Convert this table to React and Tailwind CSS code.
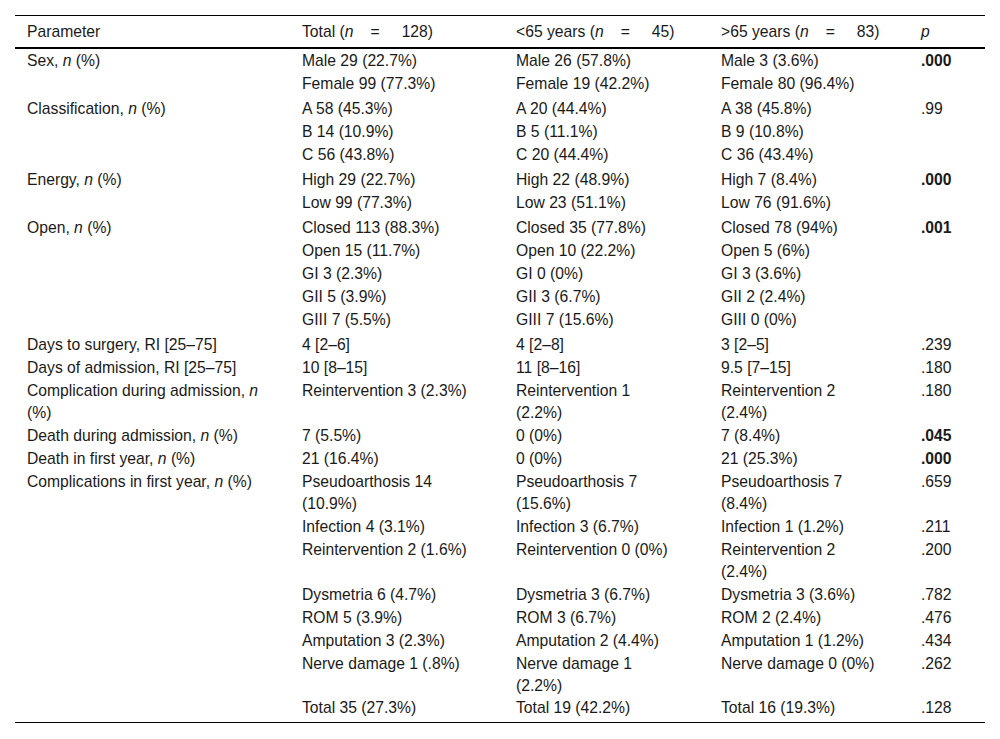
const N = () => <i>n</i>;

const groups = [
  {
    label: <>Sex, <N /> (%)</>,
    rows: [
      ["Male 29 (22.7%)", "Male 26 (57.8%)", "Male 3 (3.6%)", ".000", true],
      ["Female 99 (77.3%)", "Female 19 (42.2%)", "Female 80 (96.4%)", ""],
    ],
  },
  {
    label: <>Classification, <N /> (%)</>,
    rows: [
      ["A 58 (45.3%)", "A 20 (44.4%)", "A 38 (45.8%)", ".99"],
      ["B 14 (10.9%)", "B 5 (11.1%)", "B 9 (10.8%)", ""],
      ["C 56 (43.8%)", "C 20 (44.4%)", "C 36 (43.4%)", ""],
    ],
  },
  {
    label: <>Energy, <N /> (%)</>,
    rows: [
      ["High 29 (22.7%)", "High 22 (48.9%)", "High 7 (8.4%)", ".000", true],
      ["Low 99 (77.3%)", "Low 23 (51.1%)", "Low 76 (91.6%)", ""],
    ],
  },
  {
    label: <>Open, <N /> (%)</>,
    rows: [
      ["Closed 113 (88.3%)", "Closed 35 (77.8%)", "Closed 78 (94%)", ".001", true],
      ["Open 15 (11.7%)", "Open 10 (22.2%)", "Open 5 (6%)", ""],
      ["GI 3 (2.3%)", "GI 0 (0%)", "GI 3 (3.6%)", ""],
      ["GII 5 (3.9%)", "GII 3 (6.7%)", "GII 2 (2.4%)", ""],
      ["GIII 7 (5.5%)", "GIII 7 (15.6%)", "GIII 0 (0%)", ""],
    ],
  },
  {
    label: <>Days to surgery, RI [25–75]</>,
    rows: [["4 [2–6]", "4 [2–8]", "3 [2–5]", ".239"]],
  },
  {
    label: <>Days of admission, RI [25–75]</>,
    rows: [["10 [8–15]", "11 [8–16]", "9.5 [7–15]", ".180"]],
  },
  {
    label: <>Complication during admission, <N /><br />(%)</>,
    rows: [["Reintervention 3 (2.3%)", "Reintervention 1\n(2.2%)", "Reintervention 2\n(2.4%)", ".180"]],
  },
  {
    label: <>Death during admission, <N /> (%)</>,
    rows: [["7 (5.5%)", "0 (0%)", "7 (8.4%)", ".045", true]],
  },
  {
    label: <>Death in first year, <N /> (%)</>,
    rows: [["21 (16.4%)", "0 (0%)", "21 (25.3%)", ".000", true]],
  },
  {
    label: <>Complications in first year, <N /> (%)</>,
    tight: true,
    rows: [
      ["Pseudoarthosis 14\n(10.9%)", "Pseudoarthosis 7\n(15.6%)", "Pseudoarthosis 7\n(8.4%)", ".659"],
      ["Infection 4 (3.1%)", "Infection 3 (6.7%)", "Infection 1 (1.2%)", ".211"],
      ["Reintervention 2 (1.6%)", "Reintervention 0 (0%)", "Reintervention 2\n(2.4%)", ".200"],
      ["Dysmetria 6 (4.7%)", "Dysmetria 3 (6.7%)", "Dysmetria 3 (3.6%)", ".782"],
      ["ROM 5 (3.9%)", "ROM 3 (6.7%)", "ROM 2 (2.4%)", ".476"],
      ["Amputation 3 (2.3%)", "Amputation 2 (4.4%)", "Amputation 1 (1.2%)", ".434"],
      ["Nerve damage 1 (.8%)", "Nerve damage 1\n(2.2%)", "Nerve damage 0 (0%)", ".262"],
      ["Total 35 (27.3%)", "Total 19 (42.2%)", "Total 16 (19.3%)", ".128"],
    ],
  },
];

function Eq({ value }) {
  return (
    <>
      (<i>n</i>
      <span className="ml-[17px] mr-[22px]">=</span>
      {value})
    </>
  );
}

export default function App() {
  const cell = "pl-[12px] pr-[6px] align-top text-left whitespace-pre-line";
  const head = `${cell} font-normal pt-[4px] pb-[4px] leading-[23px]`;
  return (
    <div
      className="bg-white min-h-[739px] px-[15px] pt-[15px] text-[15.7px] leading-[22px] text-[#1a1a1a]"
      style={{ fontFamily: '"Liberation Sans", Arial, sans-serif' }}
    >
      <table className="w-[970px] table-fixed border-collapse">
        <colgroup>
          <col className="w-[275px]" />
          <col className="w-[214px]" />
          <col className="w-[205px]" />
          <col className="w-[200px]" />
          <col className="w-[76px]" />
        </colgroup>
        <thead>
          <tr className="border-t border-b-2 border-black">
            <th className={head}>Parameter</th>
            <th className={head}>
              Total <Eq value="128" />
            </th>
            <th className={head}>
              &lt;65 years <Eq value="45" />
            </th>
            <th className={head}>
              &gt;65 years <Eq value="83" />
            </th>
            <th className={head}>
              <i>p</i>
            </th>
          </tr>
        </thead>
        <tbody className="border-b border-black">
          {groups.map((g, gi) =>
            g.rows.map((r, ri) => {
              const lastAll = gi === groups.length - 1 && ri === g.rows.length - 1;
              const groupEnd = ri === g.rows.length - 1 && g.rows.length > 1 && !g.tight;
              const pad = lastAll ? "pb-[3px]" : groupEnd ? "pt-[1px] pb-[2px]" : "pt-[1px]";
              return (
                <tr key={`${gi}-${ri}`}>
                  {ri === 0 && (
                    <td className={`${cell} pt-[1px]`} rowSpan={g.rows.length}>
                      {g.label}
                    </td>
                  )}
                  <td className={`${cell} ${pad}`}>{r[0]}</td>
                  <td className={`${cell} ${pad}`}>{r[1]}</td>
                  <td className={`${cell} ${pad}`}>{r[2]}</td>
                  <td className={`${cell} ${pad} ${r[4] ? "font-bold" : ""}`}>{r[3]}</td>
                </tr>
              );
            })
          )}
        </tbody>
      </table>
    </div>
  );
}
